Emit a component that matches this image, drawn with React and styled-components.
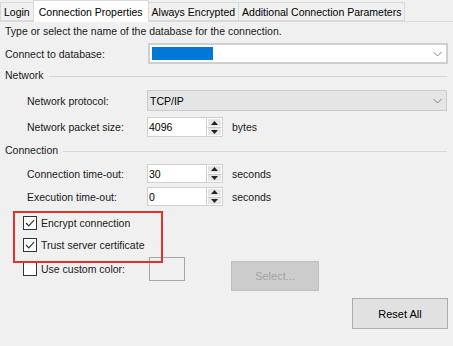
import styled, { createGlobalStyle } from "styled-components";

const GlobalStyle = createGlobalStyle`
  html, body {
    margin: 0;
    padding: 0;
    background: #f0f0f0;
  }
  * {
    box-sizing: border-box;
  }
`;

const Window = styled.div`
  position: relative;
  width: 453px;
  height: 346px;
  overflow: hidden;
  background: #f0f0f0;
  font-family: "Liberation Sans", Arial, sans-serif;
  font-size: 10.5px;
  color: #1a1a1a;
`;

const TabStrip = styled.div`
  display: flex;
  align-items: flex-end;
  height: 22px;
  padding-left: 1px;
  border-bottom: 1px solid #dadada;
`;

const Tab = styled.div`
  display: flex;
  align-items: center;
  height: ${(p) => (p.$active ? "22px" : "19px")};
  margin-bottom: ${(p) => (p.$active ? "-1px" : "0")};
  padding: 0 ${(p) => (p.$active ? "5px" : "3px")};
  background: ${(p) => (p.$active ? "#ffffff" : "#f0f0f0")};
  border: 1px solid #d9d9d9;
  border-bottom: ${(p) => (p.$active ? "none" : "1px solid #d9d9d9")};
  margin-left: -1px;
  white-space: nowrap;
  color: #000;
`;

const Panel = styled.div`
  display: flex;
  flex-direction: column;
  padding: 3px 5px 0 5px;
`;

const Hint = styled.div`
  height: 12px;
  line-height: 12px;
`;

const Row = styled.div`
  display: flex;
  align-items: center;
  height: ${(p) => p.$h || 20}px;
  margin-top: ${(p) => p.$mt || 0}px;
  padding-left: ${(p) => (p.$indent ? 22 : 0)}px;
`;

const Label = styled.div`
  width: ${(p) => (p.$indent ? 121 : 143)}px;
  flex-shrink: 0;
  white-space: nowrap;
`;

const GroupHeader = styled.div`
  display: flex;
  align-items: center;
  gap: 5px;
  height: 12px;
  margin-top: ${(p) => p.$mt}px;
  &::after {
    content: "";
    flex: 1;
    height: 1px;
    margin-top: 3px;
    margin-right: 1px;
    background: #d5d5d5;
  }
`;

const Combo = styled.div`
  flex: 1;
  display: flex;
  align-items: center;
  justify-content: space-between;
  height: 100%;
  padding: 0 4px 0 2px;
  margin-left: ${(p) => (p.$shift ? "-1px" : "0")};
  margin-right: ${(p) => (p.$shift ? "1px" : "0")};
  background: ${(p) => (p.$disabled ? "#e5e5e5" : "#ffffff")};
  border: ${(p) => (p.$disabled ? "1px solid #cccccc" : "2px solid #cfcfcf")};
  color: #000;
`;

const Selection = styled.div`
  width: 61px;
  height: 13px;
  background: #0078d7;
`;

const Chevron = () => (
  <svg width="9" height="6" viewBox="0 0 9 6">
    <path d="M0.5 1 L4.5 5 L8.5 1" fill="none" stroke="#808080" strokeWidth="1" />
  </svg>
);

const Spin = styled.div`
  display: flex;
  height: 100%;
  width: 76px;
  margin-left: -1px;
  background: #ffffff;
  border: 1px solid #d0d0d0;
`;

const SpinValue = styled.div`
  flex: 1;
  display: flex;
  align-items: center;
  padding-left: 1px;
  color: #000;
`;

const SpinButtons = styled.div`
  display: flex;
  flex-direction: column;
  width: 16px;
  border-left: 1px solid #d0d0d0;
  background: #f0f0f0;
`;

const SpinButton = styled.div`
  flex: 1;
  display: flex;
  align-items: center;
  justify-content: center;
  background: #e6e6e6;
  border: 1px solid #ffffff;
  & + & {
    border-top: 1px solid #c8c8c8;
  }
`;

const Unit = styled.div`
  margin-left: 9px;
`;

const Arrow = ({ up }) => (
  <svg width="7" height="4" viewBox="0 0 7 4">
    <path d={up ? "M0 4 L3.5 0 L7 4 Z" : "M0 0 L7 0 L3.5 4 Z"} fill="#222" />
  </svg>
);

const Spinner = ({ value, unit }) => (
  <>
    <Spin>
      <SpinValue>{value}</SpinValue>
      <SpinButtons>
        <SpinButton>
          <Arrow up />
        </SpinButton>
        <SpinButton>
          <Arrow />
        </SpinButton>
      </SpinButtons>
    </Spin>
    <Unit>{unit}</Unit>
  </>
);

const CheckRow = styled.label`
  display: flex;
  align-items: center;
  gap: 4px;
  height: 14px;
  margin-top: ${(p) => p.$mt || 0}px;
  padding-left: 18px;
  width: ${(p) => (p.$w ? p.$w + "px" : "auto")};
  flex-shrink: 0;
  white-space: nowrap;
`;

const Box = styled.span`
  display: flex;
  align-items: center;
  justify-content: center;
  width: 14px;
  height: 14px;
  background: #ffffff;
  border: 1px solid #333333;
`;

const Check = ({ on }) => (
  <Box>
    {on && (
      <svg width="10" height="8" viewBox="0 0 10 8">
        <path d="M1 4 L3.8 6.8 L9 1.2" fill="none" stroke="#333" strokeWidth="1.2" />
      </svg>
    )}
  </Box>
);

const ColorRow = styled.div`
  display: flex;
  align-items: flex-start;
  height: 34px;
  margin-top: 5px;
`;

const ColorLeft = styled.div`
  display: flex;
  align-items: center;
  height: 24px;
`;

const Swatch = styled.div`
  width: 36px;
  height: 24px;
  border: 1px solid #a6a6a6;
  background: #f0f0f0;
`;

const Button = styled.div`
  display: flex;
  align-items: center;
  justify-content: center;
  width: ${(p) => p.$w}px;
  height: ${(p) => p.$h}px;
  margin-top: ${(p) => p.$mt || 0}px;
  margin-left: ${(p) => p.$ml || 0}px;
  background: ${(p) => (p.$disabled ? "#cccccc" : "#e1e1e1")};
  border: 1px solid ${(p) => (p.$disabled ? "#bfbfbf" : "#adadad")};
  color: ${(p) => (p.$disabled ? "#a3a3a3" : "#000")};
  font-size: 11px;
`;

const Footer = styled.div`
  display: flex;
  justify-content: flex-end;
  margin-top: 7px;
`;

const Highlight = styled.div`
  position: absolute;
  left: 13px;
  top: 211px;
  width: 150px;
  height: 52px;
  border: 2px solid #e8302a;
  pointer-events: none;
`;

export default function App() {
  return (
    <Window>
      <GlobalStyle />
      <TabStrip>
        <Tab>Login</Tab>
        <Tab $active>Connection Properties</Tab>
        <Tab>Always Encrypted</Tab>
        <Tab>Additional Connection Parameters</Tab>
      </TabStrip>
      <Panel>
        <Hint>Type or select the name of the database for the connection.</Hint>
        <Row $mt={6} $h={21}>
          <Label>Connect to database:</Label>
          <Combo>
            <Selection />
            <Chevron />
          </Combo>
        </Row>
        <GroupHeader $mt={5}>Network</GroupHeader>
        <Row $mt={9} $h={21} $indent>
          <Label $indent>Network protocol:</Label>
          <Combo $disabled $shift>
            <span>TCP/IP</span>
            <Chevron />
          </Combo>
        </Row>
        <Row $mt={6} $h={20} $indent>
          <Label $indent>Network packet size:</Label>
          <Spinner value="4096" unit="bytes" />
        </Row>
        <GroupHeader $mt={7}>Connection</GroupHeader>
        <Row $mt={8} $h={19} $indent>
          <Label $indent>Connection time-out:</Label>
          <Spinner value="30" unit="seconds" />
        </Row>
        <Row $mt={4} $h={19} $indent>
          <Label $indent>Execution time-out:</Label>
          <Spinner value="0" unit="seconds" />
        </Row>
        <CheckRow $mt={10}>
          <Check on />
          Encrypt connection
        </CheckRow>
        <CheckRow $mt={8}>
          <Check on />
          Trust server certificate
        </CheckRow>
        <ColorRow>
          <ColorLeft>
            <CheckRow $w={144}>
              <Check />
              Use custom color:
            </CheckRow>
            <Swatch />
          </ColorLeft>
          <Button $disabled $w={88} $h={30} $mt={4} $ml={46}>
            Select...
          </Button>
        </ColorRow>
        <Footer>
          <Button $w={96} $h={31}>
            Reset All
          </Button>
        </Footer>
      </Panel>
      <Highlight />
    </Window>
  );
}
